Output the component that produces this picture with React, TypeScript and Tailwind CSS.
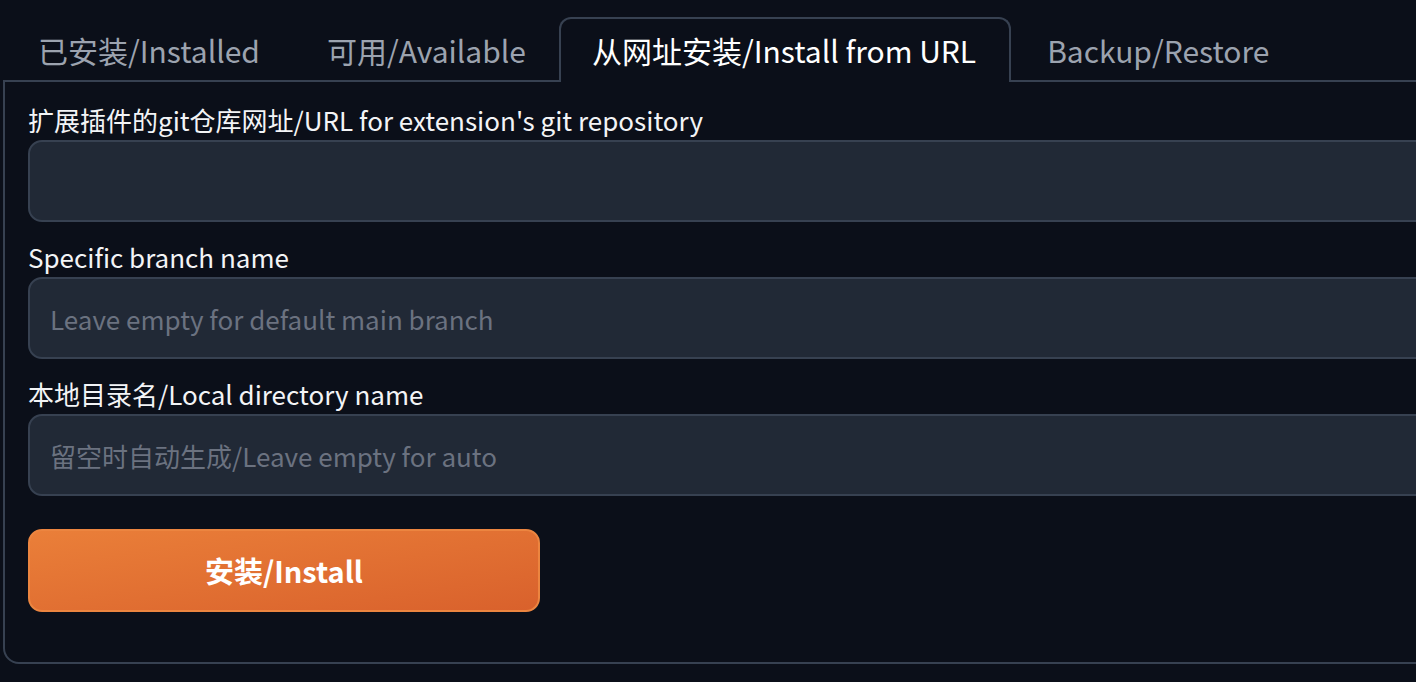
import React from "react";

const font = { fontFamily: '"Noto Sans CJK SC", "Noto Sans", sans-serif' };

const tabs = ["已安装/Installed", "可用/Available", "从网址安装/Install from URL", "Backup/Restore"];

const Field: React.FC<{ label: string; placeholder?: string }> = ({ label, placeholder }) => (
  <div className="flex flex-col">
    <label className="text-[26px] leading-[32px] text-[#f3f4f6] mb-[4px]">{label}</label>
    <div className="h-[82px] rounded-[14px] border-2 border-[#374151] bg-[#212936] flex items-center pl-[20px]">
      <span className="text-[26px] text-[#6b7280]">{placeholder}</span>
    </div>
  </div>
);

export default function App() {
  return (
    <div
      className="w-[1416px] h-[682px] overflow-hidden bg-[#0b0f19] pt-[17px] pl-[3px]"
      style={font}
    >
      <div className="flex items-end gap-[2px] relative z-10 pl-[1px]">
        {tabs.map((t, i) =>
          i === 2 ? (
            <div
              key={t}
              className="pl-[31px] pr-[33px] pt-[13px] pb-[14px] -mb-[2px] border-2 border-b-0 border-[#374151] rounded-t-[12px] bg-[#0b0f19] text-[30px] leading-[36px] text-white"
            >
              {t}
            </div>
          ) : (
            <div
              key={t}
              className="pl-[34px] pr-[31px] pt-[15px] pb-[12px] text-[30px] leading-[36px] text-[#9ca3af]"
            >
              {t}
            </div>
          )
        )}
      </div>
      <div className="w-[1460px] h-[584px] border-2 border-[#374151] rounded-b-[16px] pt-[22px] pl-[23px] pr-[30px]">
        <div className="flex flex-col gap-[19px]">
          <Field label="扩展插件的git仓库网址/URL for extension's git repository" />
          <Field label="Specific branch name" placeholder="Leave empty for default main branch" />
          <Field label="本地目录名/Local directory name" placeholder="留空时自动生成/Leave empty for auto" />
        </div>
        <button className="mt-[33px] w-[512px] h-[83px] rounded-[14px] border-2 border-[#ec8540] bg-gradient-to-br from-[#ea7f39] to-[#d9612c] text-white text-[29px] font-bold">
          安装/Install
        </button>
      </div>
    </div>
  );
}
